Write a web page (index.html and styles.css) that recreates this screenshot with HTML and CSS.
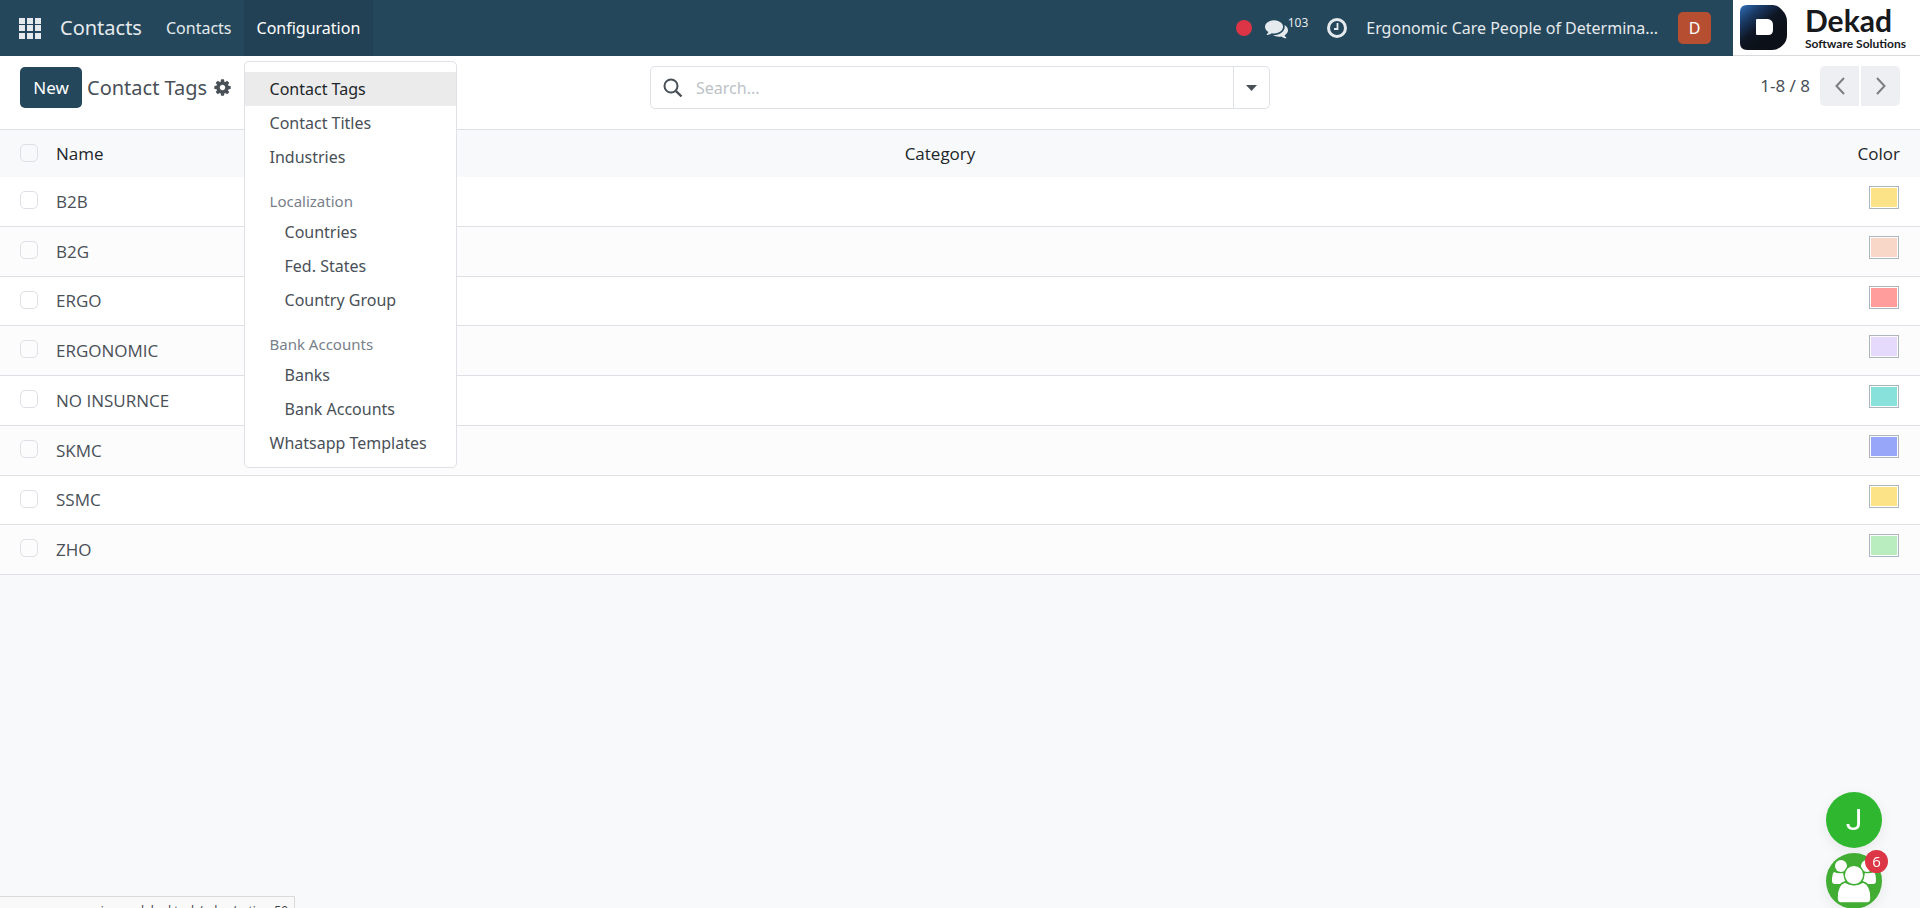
FILE: index.html
```html
<!DOCTYPE html>
<html lang="en">
<head>
  <meta charset="UTF-8">
  <meta name="viewport" content="width=device-width, initial-scale=1.0">
  <title>Contact Tags</title>
  <link rel="stylesheet" href="styles.css">
</head>
<body>
  <header class="navbar">
    <button type="button" class="apps-btn" aria-label="Home menu">
      <svg width="22" height="21" viewBox="0 0 22 21" fill="currentColor">
        <path d="M0 0h6v6H0zM8 0h6v6H8zM16 0h6v6h-6zM0 7h6v6H0zM8 7h6v6H8zM16 7h6v6h-6zM0 15h6v6H0zM8 15h6v6H8zM16 15h6v6h-6z"/>
      </svg>
    </button>
    <a href="#" class="brand">Contacts</a>
    <nav class="nav-menu">
      <a href="#" class="nav-link">Contacts</a>
      <div class="nav-item">
        <button type="button" class="nav-link active" aria-expanded="true">Configuration</button>
        <div class="dropdown">
          <a href="#" class="dropdown-item selected">Contact Tags</a>
          <a href="#" class="dropdown-item">Contact Titles</a>
          <a href="#" class="dropdown-item">Industries</a>
          <div class="dropdown-header">Localization</div>
          <a href="#" class="dropdown-item nested">Countries</a>
          <a href="#" class="dropdown-item nested">Fed. States</a>
          <a href="#" class="dropdown-item nested">Country Group</a>
          <div class="dropdown-header">Bank Accounts</div>
          <a href="#" class="dropdown-item nested">Banks</a>
          <a href="#" class="dropdown-item nested">Bank Accounts</a>
          <a href="#" class="dropdown-item">Whatsapp Templates</a>
        </div>
      </div>
    </nav>

    <div class="systray">
      <span class="status-dot"></span>
      <button type="button" class="tray-btn" aria-label="Messages">
        <svg width="23" height="23" viewBox="0 0 1792 1792" fill="currentColor">
          <path d="M1408 768q0 139-94 257t-256.500 186.500-353.500 68.500q-86 0-176-16-124 88-278 128-36 9-86 16h-3q-11 0-20.500-8t-11.500-21q-1-3-1-6.500t.5-6.500 2-6l2.500-5 3.500-5.500 4-5 4.500-5 4-4.500q5-6 23-25t26-29.500 22.500-29 25-38.500 20.500-44q-124-72-195-177t-71-224q0-139 94-257t256.500-186.500 353.500-68.500 353.500 68.500 256.500 186.500 94 257zm384 256q0 120-71 224.500t-195 176.500q10 24 20.500 44t25 38.500 22.500 29 26 29.500 23 25q1 1 4 4.500t4.500 5 4 5 3.500 5.500l2.500 5 2 6 .5 6.500-1 6.500q-3 14-13 22t-22 7q-50-7-86-16-154-40-278-128-90 16-176 16-271 0-472-132 58 4 88 4 161 0 309-45t264-129q125-92 192-212t67-254q0-77-23-152 129 71 204 178t75 230z"/>
        </svg>
        <span class="count">103</span>
      </button>
      <button type="button" class="tray-btn" aria-label="Activities">
        <svg width="20" height="20" viewBox="0 0 20 20" fill="none" stroke="currentColor">
          <circle cx="10" cy="10" r="8.500" stroke-width="3"/>
          <path d="M10.500 5v6H7" stroke-width="1.800"/>
        </svg>
      </button>
      <button type="button" class="company">Ergonomic Care People of Determina...</button>
      <button type="button" class="avatar">D</button>
    </div>

    <a href="#" class="logo">
      <svg width="47" height="45" viewBox="0 0 47 45">
        <defs>
          <linearGradient id="logoFill" x1="0" y1="0" x2="0.600" y2="0.700">
            <stop offset="0" stop-color="#2f6fb8"/>
            <stop offset="0.350" stop-color="#1a3a66"/>
            <stop offset="0.700" stop-color="#0e1624"/>
            <stop offset="1" stop-color="#0c1119"/>
          </linearGradient>
        </defs>
        <path d="M7 0H33Q38 0 42 5Q47 10 47 16V30Q47 36 43 40Q38 45 32 45H7Q0 45 0 38V7Q0 0 7 0Z" fill="url(#logoFill)"/>
        <path d="M17 14h11q5 1 5 6v5q0 5-5 5H17q-1 0-1-1V15q0-1 1-1z" fill="#fff"/>
      </svg>
      <span class="logo-text">
        <strong>Dekad</strong>
        <small>Software Solutions</small>
      </span>
    </a>
  </header>

  <section class="control-panel">
    <div class="panel-left">
      <button type="button" class="new-btn">New</button>
      <h1>Contact Tags</h1>
      <button type="button" class="gear-btn" aria-label="Actions">
        <svg width="19" height="19" viewBox="0 0 1792 1792" fill="currentColor">
          <path d="M1152 896q0-106-75-181t-181-75-181 75-75 181 75 181 181 75 181-75 75-181zm512-109v222q0 12-8 23t-20 13l-185 28q-19 54-39 91 35 50 107 138 10 12 10 25t-9 23q-27 37-99 108t-94 71q-12 0-26-9l-138-108q-44 23-91 38-16 136-29 186-7 28-36 28h-222q-14 0-24.500-8.500t-11.500-21.500l-28-184q-49-16-90-37l-141 107q-10 9-25 9-14 0-25-11-126-114-165-168-7-10-7-23 0-12 8-23 15-21 51-66.500t54-70.500q-27-50-41-99l-183-27q-13-2-21-12.500t-8-23.500v-222q0-12 8-23t19-13l186-28q14-46 39-92-40-57-107-138-10-12-10-24 0-10 9-23 26-36 98.500-107.500t94.500-71.500q13 0 26 10l138 107q44-23 91-38 16-136 29-186 7-28 36-28h222q14 0 24.500 8.500t11.500 21.500l28 184q49 16 90 37l142-107q9-9 24-9 13 0 25 10 129 119 165 170 7 8 7 22 0 12-8 23-15 21-51 66.500t-54 70.500q26 50 41 98l183 28q13 2 21 12.500t8 23.500z"/>
        </svg>
      </button>
    </div>

    <form class="search" role="search">
      <svg width="20" height="20" viewBox="0 0 20 20" fill="none" stroke="currentColor" stroke-width="2">
        <circle cx="8" cy="8" r="6.500"/>
        <path d="M12.800 12.800L18.500 18.500" stroke-width="2.400"/>
      </svg>
      <input type="text" placeholder="Search..." aria-label="Search">
      <button type="button" class="search-toggle" aria-label="Toggle search panel">
        <svg width="11" height="6" viewBox="0 0 11 6" fill="currentColor"><path d="M0 0h11L5.500 6z"/></svg>
      </button>
    </form>

    <div class="pager">
      <span>1-8 / 8</span>
      <div class="pager-buttons">
        <button type="button" aria-label="Previous">
          <svg width="10" height="18" viewBox="0 0 10 18" fill="none" stroke="currentColor" stroke-width="2"><path d="M9 1L1.500 9L9 17"/></svg>
        </button>
        <button type="button" aria-label="Next">
          <svg width="10" height="18" viewBox="0 0 10 18" fill="none" stroke="currentColor" stroke-width="2"><path d="M1 1l7.500 8L1 17"/></svg>
        </button>
      </div>
    </div>
  </section>

  <main>
    <table class="list">
      <thead>
        <tr>
          <th class="col-check"><input type="checkbox" aria-label="Select all"></th>
          <th class="col-name">Name</th>
          <th>Category</th>
          <th class="col-color">Color</th>
        </tr>
      </thead>
      <tbody>
        <tr>
          <td><input type="checkbox" aria-label="Select B2B"></td>
          <td>B2B</td>
          <td></td>
          <td class="col-color"><span class="swatch yellow"></span></td>
        </tr>
        <tr>
          <td><input type="checkbox" aria-label="Select B2G"></td>
          <td>B2G</td>
          <td></td>
          <td class="col-color"><span class="swatch peach"></span></td>
        </tr>
        <tr>
          <td><input type="checkbox" aria-label="Select ERGO"></td>
          <td>ERGO</td>
          <td></td>
          <td class="col-color"><span class="swatch red"></span></td>
        </tr>
        <tr>
          <td><input type="checkbox" aria-label="Select ERGONOMIC"></td>
          <td>ERGONOMIC</td>
          <td></td>
          <td class="col-color"><span class="swatch lilac"></span></td>
        </tr>
        <tr>
          <td><input type="checkbox" aria-label="Select NO INSURNCE"></td>
          <td>NO INSURNCE</td>
          <td></td>
          <td class="col-color"><span class="swatch teal"></span></td>
        </tr>
        <tr>
          <td><input type="checkbox" aria-label="Select SKMC"></td>
          <td>SKMC</td>
          <td></td>
          <td class="col-color"><span class="swatch blue"></span></td>
        </tr>
        <tr>
          <td><input type="checkbox" aria-label="Select SSMC"></td>
          <td>SSMC</td>
          <td></td>
          <td class="col-color"><span class="swatch yellow"></span></td>
        </tr>
        <tr>
          <td><input type="checkbox" aria-label="Select ZHO"></td>
          <td>ZHO</td>
          <td></td>
          <td class="col-color"><span class="swatch green"></span></td>
        </tr>
      </tbody>
    </table>
  </main>

  <div class="chat-hub">
    <button type="button" class="bubble">J</button>
    <button type="button" class="bubble group" aria-label="Group chat">
      <svg width="56" height="56" viewBox="0 0 56 56" fill="#fff">
        <circle cx="15" cy="13" r="6"/>
        <circle cx="41" cy="13" r="6"/>
        <path d="M8 19q-2 2-2 9 0 3 3 3h8l3-4-3-7q-5 1-9-1z"/>
        <path d="M48 19q2 2 2 9 0 3-3 3h-8l-3-4 3-7q5 1 9-1z"/>
        <g stroke="#41ad33" stroke-width="1.500">
          <path d="M19 29q9 5 18 0 8 2 8 16 0 5-4 5H15q-4 0-4-5 0-14 8-16z"/>
          <circle cx="28" cy="22" r="9.800"/>
        </g>
      </svg>
      <span class="badge">6</span>
    </button>
  </div>

  <div class="link-status">ergonomiccare.dekad.tech/odoo/action-59</div>
</body>
</html>
```

FILE: styles.css
```css
* {
  margin: 0;
  padding: 0;
  box-sizing: border-box;
}

body {
  min-height: 100vh;
  background-color: #f8f9fb;
  color: #495057;
  font-family: 'Noto Sans', 'Open Sans', sans-serif;
  font-size: 17px;
  line-height: 26px;
}

a {
  color: inherit;
  text-decoration: none;
}

button {
  border: none;
  background: none;
  color: inherit;
  font: inherit;
  cursor: pointer;
}

svg {
  display: block;
  flex-shrink: 0;
}

/* Navbar */
.navbar {
  display: flex;
  align-items: stretch;
  height: 56px;
  background-color: #25475b;
  color: #e4eaed;
  font-size: 16px;
}

.apps-btn {
  padding: 0 19px;
}

.brand {
  display: flex;
  align-items: center;
  margin-right: 12px;
  font-size: 20px;
}

.nav-menu {
  display: flex;
}

.nav-item {
  position: relative;
}

.nav-link {
  display: flex;
  align-items: center;
  height: 100%;
  padding: 0 12px;
}

.nav-link.active {
  padding: 0 13px;
  background-color: #234154;
  color: #fff;
}

.dropdown {
  position: absolute;
  top: 61px;
  left: 0;
  z-index: 10;
  width: 213px;
  padding: 10px 0 7px;
  border: 1px solid #dee2e6;
  border-radius: 5px;
  background-color: #fff;
  color: #495057;
}

.dropdown-item {
  display: block;
  padding: 4px 25px;
  white-space: nowrap;
}

.dropdown-item.selected {
  background-color: #ebebeb;
  color: #212529;
}

.dropdown-item.nested {
  padding-left: 40px;
}

.dropdown-header {
  padding: 14px 25px 1px;
  color: #78808a;
  font-size: 15px;
}

/* Systray */
.systray {
  display: flex;
  align-items: center;
  margin-left: auto;
}

.status-dot {
  width: 16px;
  height: 16px;
  margin-right: 13px;
  border-radius: 50%;
  background-color: #dc3545;
}

.tray-btn {
  display: flex;
  align-items: center;
  margin-right: 19px;
}

.count {
  margin-bottom: 10px;
  font-size: 12px;
}

.company {
  margin-right: 20px;
}

.avatar {
  width: 33px;
  height: 32px;
  margin-right: 22px;
  border-radius: 5px;
  background-color: #b64f32;
  color: #fff;
}

.logo {
  display: flex;
  align-items: center;
  gap: 18px;
  width: 187px;
  padding-left: 7px;
  border-bottom: 1px solid #d9dadc;
  background-color: #fff;
  color: #17191c;
}

.logo-text {
  display: flex;
  flex-direction: column;
  font-family: Lato, sans-serif;
  white-space: nowrap;
}

.logo-text strong {
  font-size: 30px;
  line-height: 32px;
}

.logo-text small {
  font-size: 12px;
  font-weight: bold;
  line-height: 15px;
}

/* Control panel */
.control-panel {
  display: grid;
  grid-template-columns: 1fr 620px 1fr;
  align-items: start;
  height: 74px;
  padding: 10px 20px 0;
  border-bottom: 1px solid #dee0e6;
  background-color: #fff;
}

.panel-left {
  display: flex;
  align-items: center;
  height: 43px;
}

.new-btn {
  width: 62px;
  height: 41px;
  margin-right: 5px;
  border-radius: 5px;
  background-color: #25475b;
  color: #fff;
}

.panel-left h1 {
  font-size: 20px;
  font-weight: normal;
}

.gear-btn {
  margin-left: 6px;
}

.search {
  display: flex;
  align-items: center;
  height: 43px;
  padding-left: 12px;
  border: 1px solid #dee2e6;
  border-radius: 5px;
}

.search input {
  flex: 1;
  min-width: 0;
  padding-left: 13px;
  border: none;
  outline: none;
  background: none;
  color: inherit;
  font: inherit;
  font-size: 16px;
}

.search input::placeholder {
  color: #bcc2c8;
}

.search-toggle {
  display: flex;
  align-items: center;
  justify-content: center;
  width: 36px;
  height: 100%;
  border-left: 1px solid #dee2e6;
}

.pager {
  display: flex;
  align-items: center;
  justify-content: flex-end;
  gap: 10px;
}

.pager-buttons {
  display: flex;
  gap: 2px;
}

.pager-buttons button {
  display: flex;
  align-items: center;
  justify-content: center;
  width: 39px;
  height: 40px;
  background-color: #eeeff3;
  color: #7b7d82;
}

.pager-buttons button:first-child {
  border-radius: 5px 0 0 5px;
}

.pager-buttons button:last-child {
  border-radius: 0 5px 5px 0;
}

/* List */
.list {
  width: 100%;
  border-collapse: separate;
  border-spacing: 0;
  table-layout: fixed;
  font-family: 'Open Sans', sans-serif;
}

.list th {
  height: 47px;
  padding: 0 6px;
  color: #212529;
  font-weight: normal;
  text-align: left;
}

.list td {
  height: 50px;
  padding: 0 6px;
  border-bottom: 1px solid #dee0e6;
  background-color: #fff;
}

.list tr:nth-child(even) td {
  background-color: #fcfcfc;
}

.list tr:nth-child(4n+3) td {
  height: 49px;
}

.list .col-check {
  width: 50px;
}

.list th:first-child {
  padding: 0 0 1px 20px;
}

.list td:first-child {
  padding: 0 0 3px 20px;
}

.list .col-name {
  width: 44.2%;
}

.list .col-color {
  padding: 0 20px 0 0;
  text-align: right;
}

.list td.col-color {
  padding-top: 9px;
  padding-right: 21px;
  vertical-align: top;
}

.list input {
  display: block;
  width: 18px;
  height: 18px;
  border: 1px solid #dee0e6;
  border-radius: 5px;
  appearance: none;
}

.swatch {
  display: block;
  width: 30px;
  height: 23px;
  margin-left: auto;
  padding: 1px;
  border: 1px solid #adb5bd;
  background-clip: content-box;
}

.yellow {
  background-color: #fce388;
}

.peach {
  background-color: #f8d6c8;
}

.red {
  background-color: #ff9c9c;
}

.lilac {
  background-color: #e5dafc;
}

.teal {
  background-color: #89e1db;
}

.blue {
  background-color: #97a6f9;
}

.green {
  background-color: #b9edc0;
}

/* Chat bubbles */
.chat-hub {
  position: fixed;
  top: calc(100vh - 116px);
  right: 38px;
  display: flex;
  flex-direction: column;
  gap: 5px;
}

.bubble {
  position: relative;
  width: 56px;
  height: 56px;
  border-radius: 50%;
  background-color: #2fb82f;
  box-shadow: 0 4px 14px rgba(0, 0, 0, 0.07);
  color: #fff;
  font-family: Roboto, sans-serif;
  font-size: 30px;
}

.bubble.group {
  background-color: #41ad33;
}

.badge {
  position: absolute;
  top: -3px;
  right: -6px;
  width: 23px;
  height: 23px;
  border-radius: 50%;
  background-color: #dc3545;
  font-family: 'Open Sans', sans-serif;
  font-size: 15px;
  line-height: 23px;
}

/* Browser link preview, cut off by the window edge */
.link-status {
  position: fixed;
  left: 0;
  top: calc(100vh - 12px);
  width: 295px;
  height: 24px;
  padding: 5px 6px;
  border: 1px solid #d9dadc;
  border-left: none;
  background-color: #f9f9f9;
  color: #3c4043;
  font-family: 'Open Sans', sans-serif;
  font-size: 12px;
  line-height: 18px;
  text-align: right;
}
```
